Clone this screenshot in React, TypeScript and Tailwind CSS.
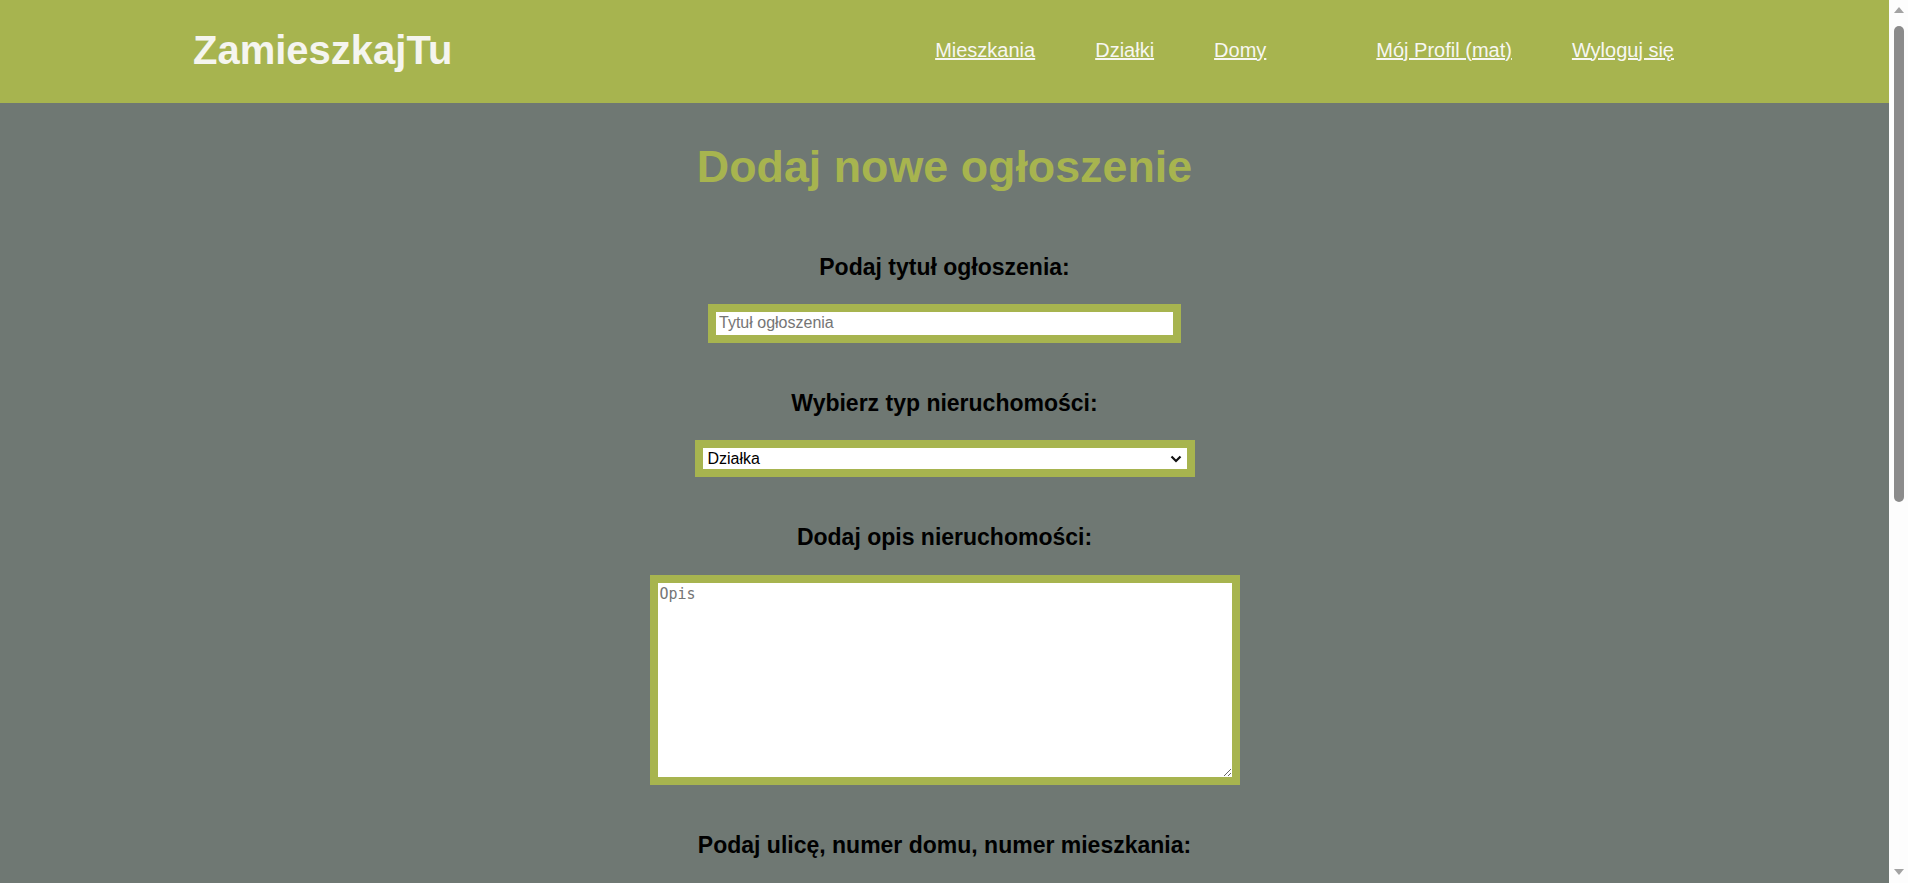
import { useState, ChangeEvent } from "react";

const font = "font-['Liberation_Sans',Arial,sans-serif]";

const labelStyle = `${font} text-[23px] leading-[1.15] font-bold text-black mb-[24px] text-center`;
const fieldBorder = "border-8 border-[#a7b44f] bg-white outline-none";

function Scrollbar() {
  return (
    <div className="flex w-[19px] shrink-0 flex-col items-center bg-[#fdfdfd] pt-[7px] pb-[8px]">
      <svg width="10" height="6" viewBox="0 0 10 6">
        <path d="M5 0 L10 6 L0 6 Z" fill="#a3a3a3" />
      </svg>
      <div className="mt-[13px] h-[476px] w-[10px] rounded-full bg-[#8b8b8b]" />
      <div className="flex-1" />
      <svg width="10" height="6" viewBox="0 0 10 6">
        <path d="M0 0 L10 0 L5 6 Z" fill="#a3a3a3" />
      </svg>
    </div>
  );
}

export default function App() {
  const [title, setTitle] = useState("");
  const [type, setType] = useState("Działka");
  const [desc, setDesc] = useState("");
  const [street, setStreet] = useState("");

  return (
    <div className="flex h-screen overflow-hidden">
      <div className={`min-w-0 flex-1 overflow-hidden bg-[#6f7873] ${font}`}>
        {/* nagłówek */}
        <header className="flex h-[103px] items-center bg-[#a7b44f] pb-[3px] pl-[193px] pr-[215px]">
          <a href="#" className="text-[40px] leading-[1.15] font-bold text-[#f5f5ef]">
            ZamieszkajTu
          </a>
          <nav className="ml-auto flex gap-[110px] text-[20px] leading-[1.15] text-[#f7f7f2]">
            <div className="flex gap-[60px]">
              <a href="#" className="underline">Mieszkania</a>
              <a href="#" className="underline">Działki</a>
              <a href="#" className="underline">Domy</a>
            </div>
            <div className="flex gap-[60px]">
              <a href="#" className="underline">Mój Profil (mat)</a>
              <a href="#" className="underline">Wyloguj się</a>
            </div>
          </nav>
        </header>

        <main className="flex flex-col items-center pb-[120px]">
          <h1 className="mt-[38px] mb-[61px] text-[44.8px] leading-[1.15] font-bold text-[#a7b44f]">
            Dodaj nowe ogłoszenie
          </h1>

          <form className="flex flex-col items-center gap-[47px]" onSubmit={(e) => e.preventDefault()}>
            {/* tytuł */}
            <div className="flex flex-col items-center">
              <label htmlFor="title" className={labelStyle}>Podaj tytuł ogłoszenia:</label>
              <input
                id="title"
                type="text"
                placeholder="Tytuł ogłoszenia"
                value={title}
                onChange={(e: ChangeEvent<HTMLInputElement>) => setTitle(e.target.value)}
                className={`${fieldBorder} h-[39px] w-[473px] px-[3px] text-[16px] text-black placeholder:text-[#757575]`}
              />
            </div>

            {/* typ */}
            <div className="flex flex-col items-center">
              <label htmlFor="type" className={labelStyle}>Wybierz typ nieruchomości:</label>
              <div className="relative">
                <select
                  id="type"
                  value={type}
                  onChange={(e: ChangeEvent<HTMLSelectElement>) => setType(e.target.value)}
                  className={`${fieldBorder} h-[37px] w-[500px] appearance-none pl-[5px] text-[16px] leading-[1.15] text-black`}
                >
                  <option>Mieszkanie</option>
                  <option>Działka</option>
                  <option>Dom</option>
                </select>
                <svg
                  className="pointer-events-none absolute right-[13px] top-[15px]"
                  width="12"
                  height="8"
                  viewBox="0 0 12 8"
                >
                  <path d="M1.5 1.5 L6 6 L10.5 1.5" fill="none" stroke="#111" strokeWidth="2.2" />
                </svg>
              </div>
            </div>

            {/* opis */}
            <div className="flex flex-col items-center">
              <label htmlFor="desc" className={labelStyle}>Dodaj opis nieruchomości:</label>
              <textarea
                id="desc"
                placeholder="Opis"
                value={desc}
                onChange={(e: ChangeEvent<HTMLTextAreaElement>) => setDesc(e.target.value)}
                className={`${fieldBorder} block h-[210px] w-[590px] p-[2px] font-['DejaVu_Sans_Mono',monospace] text-[15px] leading-[1.2] text-black placeholder:text-[#757575]`}
              />
            </div>

            {/* adres */}
            <div className="flex flex-col items-center">
              <label htmlFor="street" className={`${labelStyle} !mb-[34px]`}>
                Podaj ulicę, numer domu, numer mieszkania:
              </label>
              <input
                id="street"
                type="text"
                placeholder="Ulica, numer domu, numer mieszkania"
                value={street}
                onChange={(e: ChangeEvent<HTMLInputElement>) => setStreet(e.target.value)}
                className={`${fieldBorder} h-[39px] w-[473px] px-[3px] text-[16px] text-black placeholder:text-[#757575]`}
              />
            </div>
          </form>
        </main>
      </div>
      <Scrollbar />
    </div>
  );
}
